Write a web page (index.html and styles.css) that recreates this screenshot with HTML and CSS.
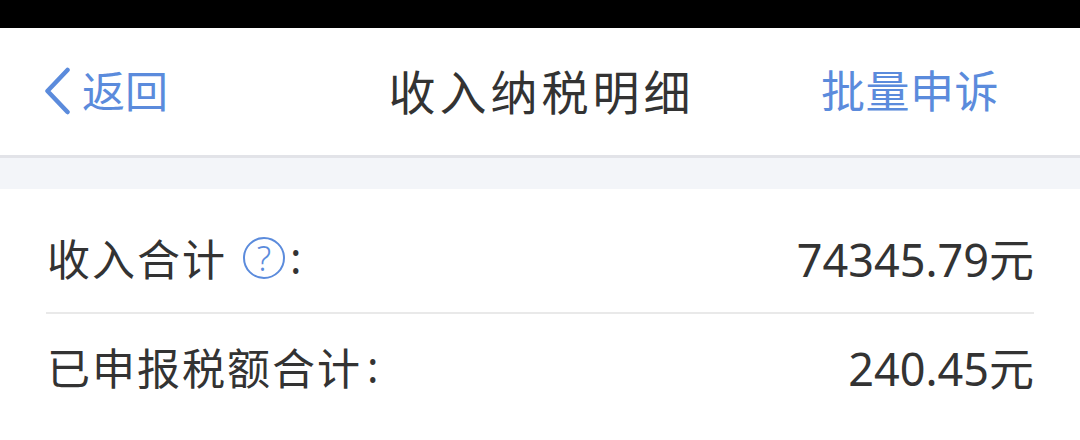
FILE: index.html
```html
<!DOCTYPE html>
<html lang="zh">
<head>
<meta charset="utf-8">
<title>收入纳税明细</title>
<link rel="stylesheet" href="styles.css">
</head>
<body>
<div class="status"></div>
<header class="nav">
  <div class="back">
    <svg class="chev" viewBox="0 0 28 48" width="28" height="48"><path d="M23.5 3 L3.5 24 L23.5 45" fill="none" stroke="#5b8bdc" stroke-width="4.5" stroke-linecap="round" stroke-linejoin="round"/></svg>
    <span>返回</span>
  </div>
  <div class="title">收入纳税明细</div>
  <div class="action">批量申诉</div>
</header>
<div class="gap"></div>
<section class="list">
  <div class="row">
    <div class="label"><span>收入合计</span><span class="help">?</span><span class="colon">:</span></div>
    <div class="value">74345.79元</div>
  </div>
  <div class="row">
    <div class="label"><span>已申报税额合计</span><span class="colon">:</span></div>
    <div class="value">240.45元</div>
  </div>
</section>
</body>
</html>
```
FILE: styles.css
```css
* { box-sizing: border-box; }
html, body { margin: 0; padding: 0; }
body { width: 1080px; height: 440px; overflow: hidden; background: #fff; font-family: "Noto Sans", "Noto Sans CJK SC", sans-serif; color: #333; }
.status { height: 28px; background: #000; }
.nav { height: 130px; display: grid; grid-template-columns: 1fr auto 1fr; align-items: center; padding: 0 44px 5px; border-bottom: 3px solid #e2e3e8; background: #fff; }
.back { display: flex; align-items: center; gap: 10px; color: #5b8bdc; font-size: 43px; }
.chev { margin-top: 4px; }
.title { font-size: 47px; color: #333; letter-spacing: 4px; padding-left: 3px; }
.action { justify-self: end; margin-right: 37px; font-size: 44px; letter-spacing: 0.5px; color: #5b8bdc; }
.gap { height: 31px; background: #f3f5f9; }
.list { margin: 0 46px; }
.row { height: 125px; padding-top: 14px; display: flex; justify-content: space-between; align-items: center; border-bottom: 2px solid #e9e9e9; }
.row:last-child { border-bottom: 0; height: 110px; padding-top: 0; padding-bottom: 6px; }
.label { display: flex; align-items: center; font-size: 43px; letter-spacing: 2px; padding-left: 1px; }
.help { width: 42px; height: 42px; margin-left: 16px; border: 2px solid #5b8bdc; border-radius: 50%; display: flex; align-items: center; justify-content: center; font-size: 34px; font-weight: 300; letter-spacing: 0; line-height: 1; color: #5b8bdc; }
.colon { margin-left: 5px; }
.value { font-size: 45px; }
```
